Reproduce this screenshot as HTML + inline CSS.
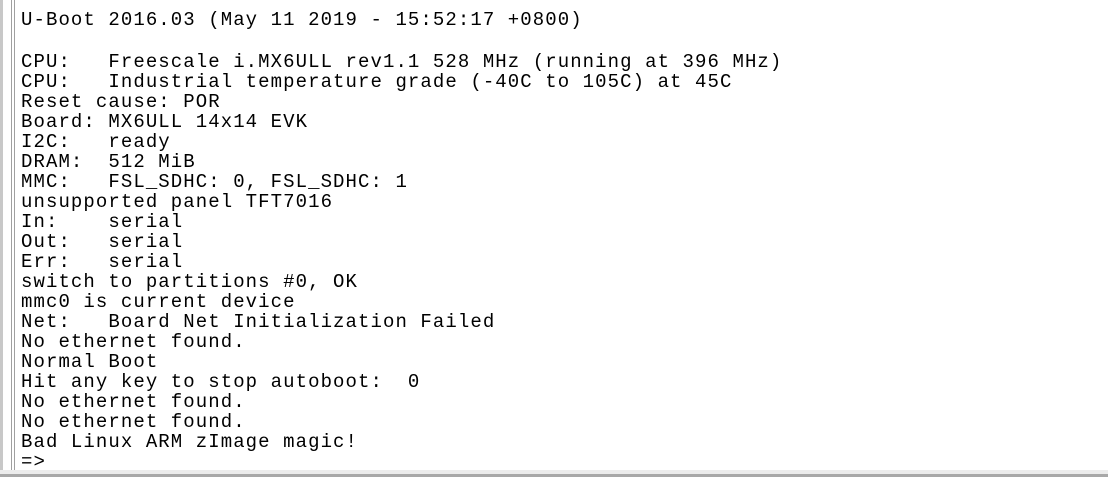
<!DOCTYPE html>
<html><head><style>
html,body{margin:0;padding:0;width:1108px;height:477px;background:#fff;overflow:hidden;position:relative}
.l1{position:absolute;left:0;top:0;width:3px;height:470px;background:#c8c8c8}
.l2{position:absolute;left:11px;top:0;width:1px;height:470px;background:#a0a0a0}
.l3{position:absolute;left:14px;top:0;width:1px;height:470px;background:#a0a0a0}
.b1{position:absolute;left:0;top:470px;width:1108px;height:4px;background:#ececec}
.b2{position:absolute;left:0;top:474px;width:1108px;height:3px;background:#a8a8a8}
pre{position:absolute;left:21px;margin:0;font-family:"Liberation Mono",monospace;font-size:19px;letter-spacing:1.08px;line-height:20px;color:#000}
</style></head><body>
<div class="l1"></div><div class="l2"></div><div class="l3"></div><div class="b1"></div><div class="b2"></div>
<pre style="top:10px">U-Boot 2016.03 (May 11 2019 - 15:52:17 +0800)</pre>
<pre style="top:52px">CPU:   Freescale i.MX6ULL rev1.1 528 MHz (running at 396 MHz)
CPU:   Industrial temperature grade (-40C to 105C) at 45C
Reset cause: POR
Board: MX6ULL 14x14 EVK
I2C:   ready
DRAM:  512 MiB
MMC:   FSL_SDHC: 0, FSL_SDHC: 1
unsupported panel TFT7016
In:    serial
Out:   serial
Err:   serial
switch to partitions #0, OK
mmc0 is current device
Net:   Board Net Initialization Failed
No ethernet found.
Normal Boot
Hit any key to stop autoboot:  0
No ethernet found.
No ethernet found.
Bad Linux ARM zImage magic!
=&gt;</pre>
</body></html>
